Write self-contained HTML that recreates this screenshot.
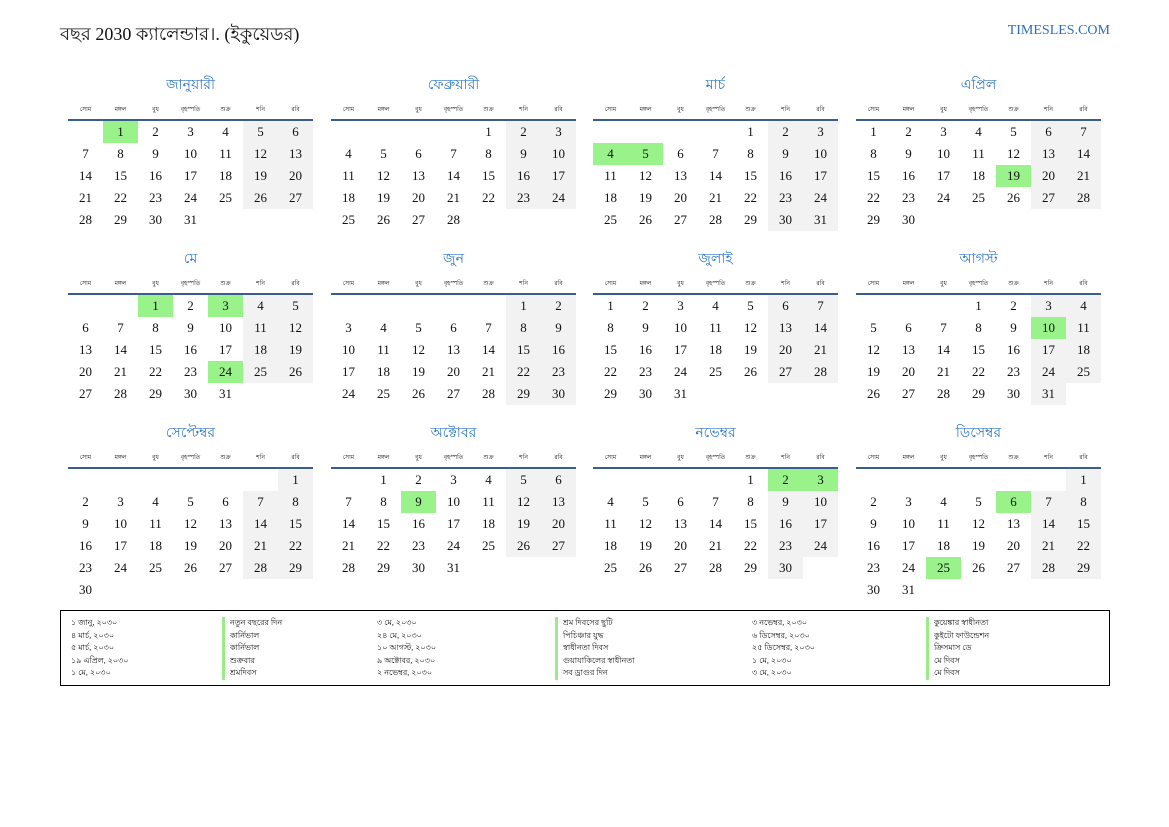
<!DOCTYPE html>
<html><head><meta charset="utf-8">
<style>
body{margin:0;width:1169px;height:827px;background:#fff;position:relative;font-family:"Liberation Serif","Noto Sans CJK SC",serif;color:#111;overflow:hidden}
.t{position:absolute;left:60px;top:20px;font-size:18px}
.s{position:absolute;right:59px;top:23px;font-size:14px;color:#2a6ebb}
.m{position:absolute;width:245px}
.m h3{margin:2px 0 0;height:20px;line-height:20px;text-align:center;font-weight:normal;font-size:14px;color:#2f78c4}
.hd{display:flex;margin-top:8px;height:12px;line-height:12px;font-size:6px;border-bottom:2px solid #3b5d8c;padding-bottom:3px}
.hd span{flex:1;text-align:center}
table{border-collapse:collapse;width:245px;table-layout:fixed}
td{height:22px;padding:0;text-align:center;font-size:13px;line-height:22px}
td:nth-child(n+6):not(:empty){background:#f2f2f2}
td.g,td.g:nth-child(n+6){background:#99f28a}
.lg{position:absolute;left:60px;top:610px;width:1048px;height:74px;border:1.5px solid #000;font-size:8px}
.lg div{position:absolute;line-height:12.5px;white-space:nowrap}
.lg .b{border-left:3px solid #9beb8a;padding-left:5px}
</style></head><body>
<div class="t">বছর 2030 ক্যালেন্ডার।. (ইকুয়েডর)</div>
<div class="s">TIMESLES.COM</div>

<div class="m" style="left:68px;top:74px"><h3>জানুয়ারী</h3><div class="hd"><span>সোম</span><span>মঙ্গল</span><span>বুধ</span><span>বৃহস্পতি</span><span>শুক্র</span><span>শনি</span><span>রবি</span></div>
<table><tr><td></td><td class="g">1</td><td>2</td><td>3</td><td>4</td><td>5</td><td>6</td></tr>
<tr><td>7</td><td>8</td><td>9</td><td>10</td><td>11</td><td>12</td><td>13</td></tr>
<tr><td>14</td><td>15</td><td>16</td><td>17</td><td>18</td><td>19</td><td>20</td></tr>
<tr><td>21</td><td>22</td><td>23</td><td>24</td><td>25</td><td>26</td><td>27</td></tr>
<tr><td>28</td><td>29</td><td>30</td><td>31</td><td></td><td></td><td></td></tr></table></div>

<div class="m" style="left:331px;top:74px"><h3>ফেব্রুয়ারী</h3><div class="hd"><span>সোম</span><span>মঙ্গল</span><span>বুধ</span><span>বৃহস্পতি</span><span>শুক্র</span><span>শনি</span><span>রবি</span></div>
<table><tr><td></td><td></td><td></td><td></td><td>1</td><td>2</td><td>3</td></tr>
<tr><td>4</td><td>5</td><td>6</td><td>7</td><td>8</td><td>9</td><td>10</td></tr>
<tr><td>11</td><td>12</td><td>13</td><td>14</td><td>15</td><td>16</td><td>17</td></tr>
<tr><td>18</td><td>19</td><td>20</td><td>21</td><td>22</td><td>23</td><td>24</td></tr>
<tr><td>25</td><td>26</td><td>27</td><td>28</td><td></td><td></td><td></td></tr></table></div>

<div class="m" style="left:593px;top:74px"><h3>মার্চ</h3><div class="hd"><span>সোম</span><span>মঙ্গল</span><span>বুধ</span><span>বৃহস্পতি</span><span>শুক্র</span><span>শনি</span><span>রবি</span></div>
<table><tr><td></td><td></td><td></td><td></td><td>1</td><td>2</td><td>3</td></tr>
<tr><td class="g">4</td><td class="g">5</td><td>6</td><td>7</td><td>8</td><td>9</td><td>10</td></tr>
<tr><td>11</td><td>12</td><td>13</td><td>14</td><td>15</td><td>16</td><td>17</td></tr>
<tr><td>18</td><td>19</td><td>20</td><td>21</td><td>22</td><td>23</td><td>24</td></tr>
<tr><td>25</td><td>26</td><td>27</td><td>28</td><td>29</td><td>30</td><td>31</td></tr></table></div>

<div class="m" style="left:856px;top:74px"><h3>এপ্রিল</h3><div class="hd"><span>সোম</span><span>মঙ্গল</span><span>বুধ</span><span>বৃহস্পতি</span><span>শুক্র</span><span>শনি</span><span>রবি</span></div>
<table><tr><td>1</td><td>2</td><td>3</td><td>4</td><td>5</td><td>6</td><td>7</td></tr>
<tr><td>8</td><td>9</td><td>10</td><td>11</td><td>12</td><td>13</td><td>14</td></tr>
<tr><td>15</td><td>16</td><td>17</td><td>18</td><td class="g">19</td><td>20</td><td>21</td></tr>
<tr><td>22</td><td>23</td><td>24</td><td>25</td><td>26</td><td>27</td><td>28</td></tr>
<tr><td>29</td><td>30</td><td></td><td></td><td></td><td></td><td></td></tr></table></div>

<div class="m" style="left:68px;top:248px"><h3>মে</h3><div class="hd"><span>সোম</span><span>মঙ্গল</span><span>বুধ</span><span>বৃহস্পতি</span><span>শুক্র</span><span>শনি</span><span>রবি</span></div>
<table><tr><td></td><td></td><td class="g">1</td><td>2</td><td class="g">3</td><td>4</td><td>5</td></tr>
<tr><td>6</td><td>7</td><td>8</td><td>9</td><td>10</td><td>11</td><td>12</td></tr>
<tr><td>13</td><td>14</td><td>15</td><td>16</td><td>17</td><td>18</td><td>19</td></tr>
<tr><td>20</td><td>21</td><td>22</td><td>23</td><td class="g">24</td><td>25</td><td>26</td></tr>
<tr><td>27</td><td>28</td><td>29</td><td>30</td><td>31</td><td></td><td></td></tr></table></div>

<div class="m" style="left:331px;top:248px"><h3>জুন</h3><div class="hd"><span>সোম</span><span>মঙ্গল</span><span>বুধ</span><span>বৃহস্পতি</span><span>শুক্র</span><span>শনি</span><span>রবি</span></div>
<table><tr><td></td><td></td><td></td><td></td><td></td><td>1</td><td>2</td></tr>
<tr><td>3</td><td>4</td><td>5</td><td>6</td><td>7</td><td>8</td><td>9</td></tr>
<tr><td>10</td><td>11</td><td>12</td><td>13</td><td>14</td><td>15</td><td>16</td></tr>
<tr><td>17</td><td>18</td><td>19</td><td>20</td><td>21</td><td>22</td><td>23</td></tr>
<tr><td>24</td><td>25</td><td>26</td><td>27</td><td>28</td><td>29</td><td>30</td></tr></table></div>

<div class="m" style="left:593px;top:248px"><h3>জুলাই</h3><div class="hd"><span>সোম</span><span>মঙ্গল</span><span>বুধ</span><span>বৃহস্পতি</span><span>শুক্র</span><span>শনি</span><span>রবি</span></div>
<table><tr><td>1</td><td>2</td><td>3</td><td>4</td><td>5</td><td>6</td><td>7</td></tr>
<tr><td>8</td><td>9</td><td>10</td><td>11</td><td>12</td><td>13</td><td>14</td></tr>
<tr><td>15</td><td>16</td><td>17</td><td>18</td><td>19</td><td>20</td><td>21</td></tr>
<tr><td>22</td><td>23</td><td>24</td><td>25</td><td>26</td><td>27</td><td>28</td></tr>
<tr><td>29</td><td>30</td><td>31</td><td></td><td></td><td></td><td></td></tr></table></div>

<div class="m" style="left:856px;top:248px"><h3>আগস্ট</h3><div class="hd"><span>সোম</span><span>মঙ্গল</span><span>বুধ</span><span>বৃহস্পতি</span><span>শুক্র</span><span>শনি</span><span>রবি</span></div>
<table><tr><td></td><td></td><td></td><td>1</td><td>2</td><td>3</td><td>4</td></tr>
<tr><td>5</td><td>6</td><td>7</td><td>8</td><td>9</td><td class="g">10</td><td>11</td></tr>
<tr><td>12</td><td>13</td><td>14</td><td>15</td><td>16</td><td>17</td><td>18</td></tr>
<tr><td>19</td><td>20</td><td>21</td><td>22</td><td>23</td><td>24</td><td>25</td></tr>
<tr><td>26</td><td>27</td><td>28</td><td>29</td><td>30</td><td>31</td><td></td></tr></table></div>

<div class="m" style="left:68px;top:422px"><h3>সেপ্টেম্বর</h3><div class="hd"><span>সোম</span><span>মঙ্গল</span><span>বুধ</span><span>বৃহস্পতি</span><span>শুক্র</span><span>শনি</span><span>রবি</span></div>
<table><tr><td></td><td></td><td></td><td></td><td></td><td></td><td>1</td></tr>
<tr><td>2</td><td>3</td><td>4</td><td>5</td><td>6</td><td>7</td><td>8</td></tr>
<tr><td>9</td><td>10</td><td>11</td><td>12</td><td>13</td><td>14</td><td>15</td></tr>
<tr><td>16</td><td>17</td><td>18</td><td>19</td><td>20</td><td>21</td><td>22</td></tr>
<tr><td>23</td><td>24</td><td>25</td><td>26</td><td>27</td><td>28</td><td>29</td></tr>
<tr><td>30</td><td></td><td></td><td></td><td></td><td></td><td></td></tr></table></div>

<div class="m" style="left:331px;top:422px"><h3>অক্টোবর</h3><div class="hd"><span>সোম</span><span>মঙ্গল</span><span>বুধ</span><span>বৃহস্পতি</span><span>শুক্র</span><span>শনি</span><span>রবি</span></div>
<table><tr><td></td><td>1</td><td>2</td><td>3</td><td>4</td><td>5</td><td>6</td></tr>
<tr><td>7</td><td>8</td><td class="g">9</td><td>10</td><td>11</td><td>12</td><td>13</td></tr>
<tr><td>14</td><td>15</td><td>16</td><td>17</td><td>18</td><td>19</td><td>20</td></tr>
<tr><td>21</td><td>22</td><td>23</td><td>24</td><td>25</td><td>26</td><td>27</td></tr>
<tr><td>28</td><td>29</td><td>30</td><td>31</td><td></td><td></td><td></td></tr></table></div>

<div class="m" style="left:593px;top:422px"><h3>নভেম্বর</h3><div class="hd"><span>সোম</span><span>মঙ্গল</span><span>বুধ</span><span>বৃহস্পতি</span><span>শুক্র</span><span>শনি</span><span>রবি</span></div>
<table><tr><td></td><td></td><td></td><td></td><td>1</td><td class="g">2</td><td class="g">3</td></tr>
<tr><td>4</td><td>5</td><td>6</td><td>7</td><td>8</td><td>9</td><td>10</td></tr>
<tr><td>11</td><td>12</td><td>13</td><td>14</td><td>15</td><td>16</td><td>17</td></tr>
<tr><td>18</td><td>19</td><td>20</td><td>21</td><td>22</td><td>23</td><td>24</td></tr>
<tr><td>25</td><td>26</td><td>27</td><td>28</td><td>29</td><td>30</td><td></td></tr></table></div>

<div class="m" style="left:856px;top:422px"><h3>ডিসেম্বর</h3><div class="hd"><span>সোম</span><span>মঙ্গল</span><span>বুধ</span><span>বৃহস্পতি</span><span>শুক্র</span><span>শনি</span><span>রবি</span></div>
<table><tr><td></td><td></td><td></td><td></td><td></td><td></td><td>1</td></tr>
<tr><td>2</td><td>3</td><td>4</td><td>5</td><td class="g">6</td><td>7</td><td>8</td></tr>
<tr><td>9</td><td>10</td><td>11</td><td>12</td><td>13</td><td>14</td><td>15</td></tr>
<tr><td>16</td><td>17</td><td>18</td><td>19</td><td>20</td><td>21</td><td>22</td></tr>
<tr><td>23</td><td>24</td><td class="g">25</td><td>26</td><td>27</td><td>28</td><td>29</td></tr>
<tr><td>30</td><td>31</td><td></td><td></td><td></td><td></td><td></td></tr></table></div>

<div class="lg">
<div style="left:10px;top:6px">১ জানু, ২০৩০<br>৪ মার্চ, ২০৩০<br>৫ মার্চ, ২০৩০<br>১৯ এপ্রিল, ২০৩০<br>১ মে, ২০৩০</div>
<div style="left:161px;top:6px"><div class="b" style="position:static">নতুন বছরের দিন</div><div class="b" style="position:static">কার্নিভাল</div><div class="b" style="position:static">কার্নিভাল</div><div class="b" style="position:static">শুক্রবার</div><div class="b" style="position:static">শ্রমদিবস</div></div>
<div style="left:316px;top:6px">৩ মে, ২০৩০<br>২৪ মে, ২০৩০<br>১০ আগস্ট, ২০৩০<br>৯ অক্টোবর, ২০৩০<br>২ নভেম্বর, ২০৩০</div>
<div style="left:494px;top:6px"><div class="b" style="position:static">শ্রম দিবসের ছুটি</div><div class="b" style="position:static">পিচিঞ্চার যুদ্ধ</div><div class="b" style="position:static">স্বাধীনতা দিবস</div><div class="b" style="position:static">গুয়াযাকিলের স্বাধীনতা</div><div class="b" style="position:static">সব ড্রাগুর দিন</div></div>
<div style="left:691px;top:6px">৩ নভেম্বর, ২০৩০<br>৬ ডিসেম্বর, ২০৩০<br>২৫ ডিসেম্বর, ২০৩০<br>১ মে, ২০৩০<br>৩ মে, ২০৩০</div>
<div style="left:865px;top:6px"><div class="b" style="position:static">কুয়েঙ্কার স্বাধীনতা</div><div class="b" style="position:static">কুইটো ফাউন্ডেশন</div><div class="b" style="position:static">ক্রিসমাস ডে</div><div class="b" style="position:static">মে দিবস</div><div class="b" style="position:static">মে দিবস</div></div>
</div>
</body></html>
